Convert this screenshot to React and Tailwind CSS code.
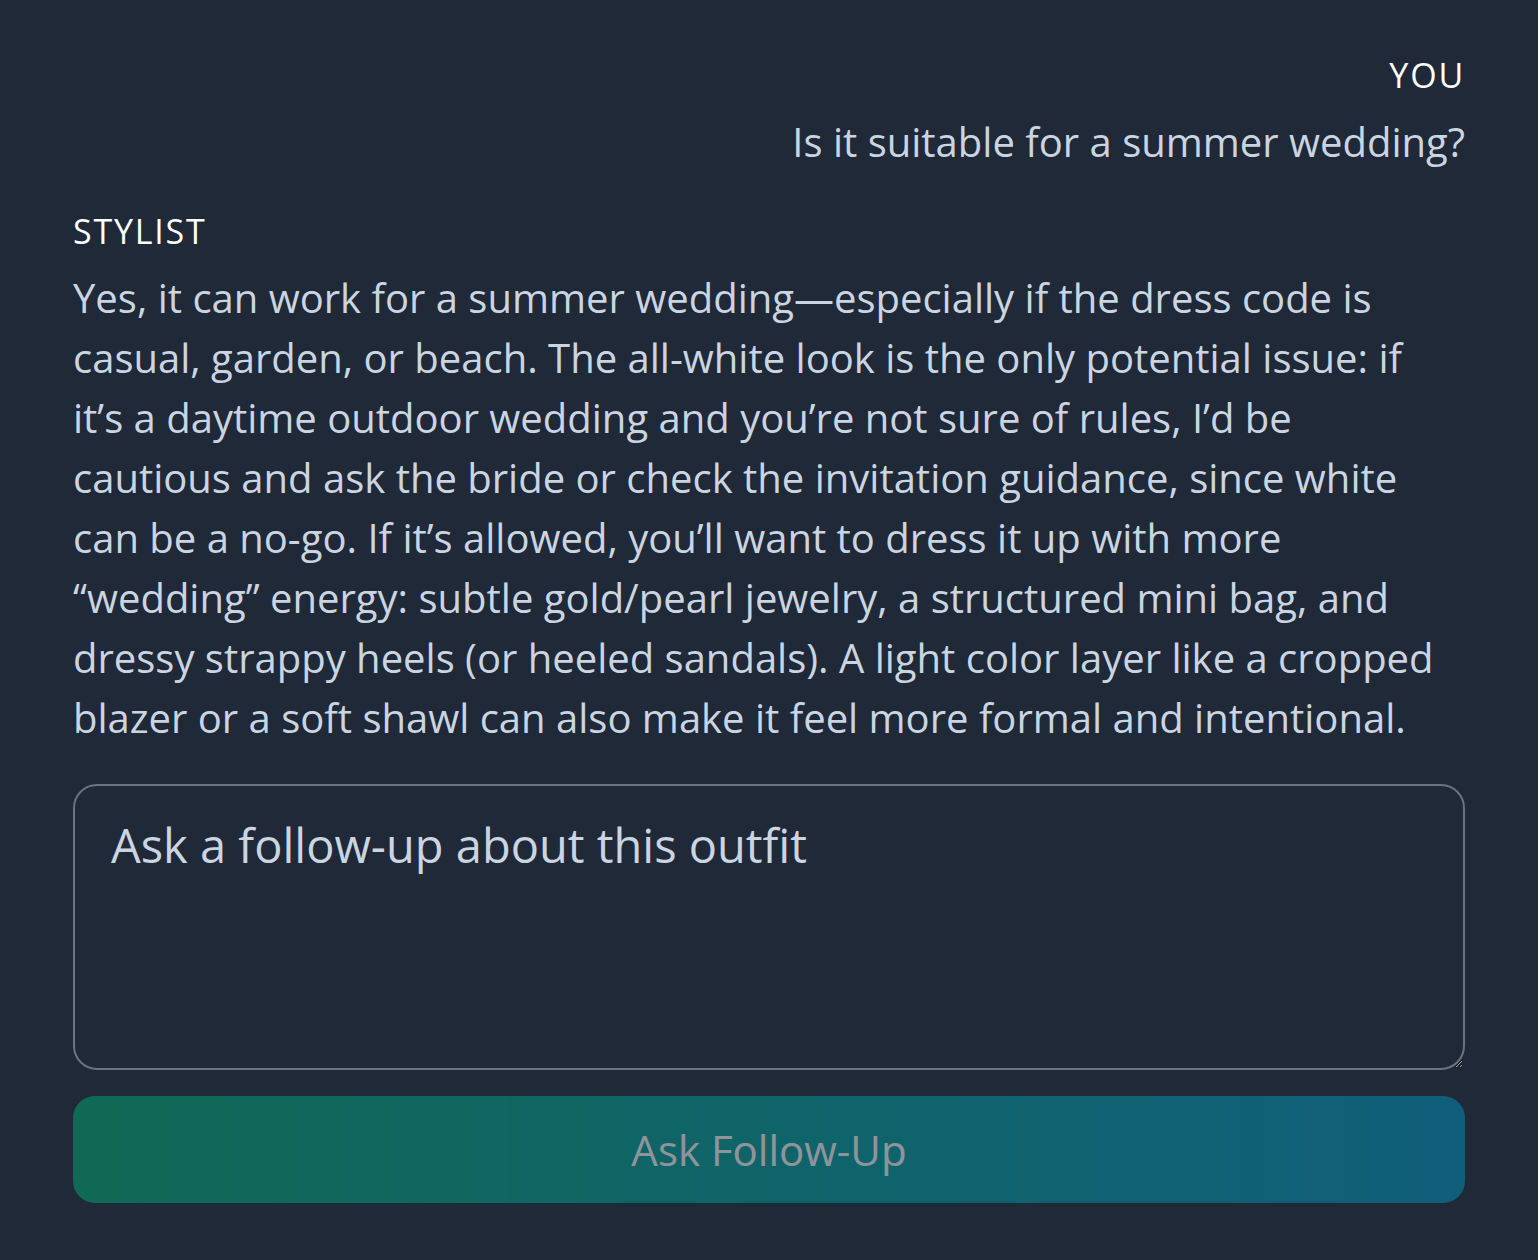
const lines = [
  'Yes, it can work for a summer wedding—especially if the dress code is',
  'casual, garden, or beach. The all-white look is the only potential issue: if',
  'it’s a daytime outdoor wedding and you’re not sure of rules, I’d be',
  'cautious and ask the bride or check the invitation guidance, since white',
  'can be a no-go. If it’s allowed, you’ll want to dress it up with more',
  '“wedding” energy: subtle gold/pearl jewelry, a structured mini bag, and',
  'dressy strappy heels (or heeled sandals). A light color layer like a cropped',
  'blazer or a soft shawl can also make it feel more formal and intentional.',
];

export default function App() {
  const font = { fontFamily: '"Open Sans", "Noto Sans", sans-serif' };
  return (
    <div className="min-h-[1260px] w-full bg-[#1f2937] px-[73px] pt-[51px]" style={font}>
      <div className="flex flex-col items-end">
        <div className="text-[34px] leading-[48px] tracking-[1.8px] text-white uppercase">You</div>
        <div className="mt-[16px] text-[40px] leading-[54px] text-[#cbd5e1]">Is it suitable for a summer wedding?</div>
      </div>
      <div className="mt-[38px]">
        <div className="text-[34px] leading-[48px] tracking-[1.8px] text-white uppercase">Stylist</div>
        <p className="mt-[13px] text-[40px] leading-[60px] text-[#cbd5e1]">
          {lines.map((l, i) => (
            <span key={i} className="block whitespace-nowrap">{l}</span>
          ))}
        </p>
      </div>
      <textarea
        className="mt-[36px] block h-[286px] w-full resize-y rounded-[24px] border-2 border-[#6b7280] bg-transparent px-[36px] py-[26px] text-[47px] leading-[66px] text-[#cbd5e1] placeholder:text-[#cbd5e1] outline-none"
        style={font}
        placeholder="Ask a follow-up about this outfit"
      />
      <button
        disabled
        className="mt-[26px] flex h-[107px] w-full items-center justify-center rounded-[22px] bg-gradient-to-r from-[#02aa72] to-[#0093bd] text-[42px] text-white opacity-50"
        style={font}
      >
        Ask Follow-Up
      </button>
    </div>
  );
}
